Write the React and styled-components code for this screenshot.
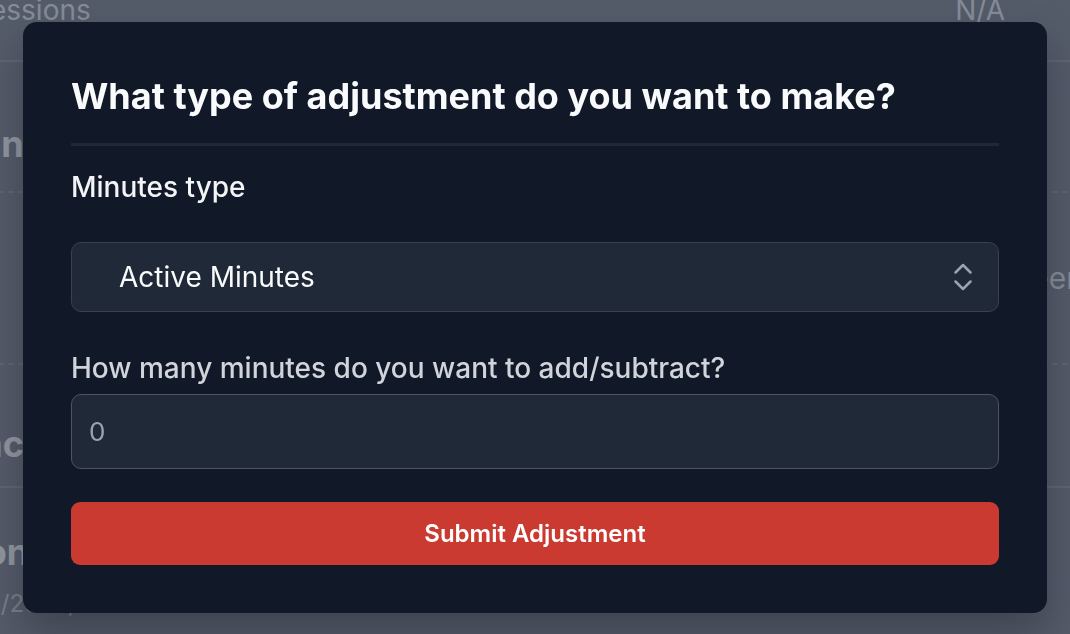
import React, { useState } from "react";
import styled, { createGlobalStyle } from "styled-components";
import { ChevronsUpDown } from "lucide-react";

const GlobalStyle = createGlobalStyle`
  * { box-sizing: border-box; }
  html, body { margin: 0; height: 100%; overflow: hidden; }
  body {
    background: #111827;
    color: #f3f4f6;
    font-family: Inter, "Noto Sans", sans-serif;
  }
`;

// page that sits behind the modal
const Bg = {
  Page: styled.main`
    width: 1170px;
    margin-left: -42px;
  `,
  StatRow: styled.div`
    display: flex;
    justify-content: space-between;
    align-items: flex-start;
    height: 62px;
    padding: 0 123px 0 14px;
    border-bottom: 2px solid #374151;
    font-size: 28px;
    line-height: 20px;
    color: #d1d5db;
  `,
  Section: styled.section`
    display: flex;
    flex-direction: ${p => (p.$column ? "column" : "row")};
    justify-content: ${p => p.$justify || "flex-start"};
    align-items: ${p => p.$align || "flex-end"};
    height: ${p => p.$h}px;
    padding: ${p => p.$pt || 0}px ${p => p.$pr || 0}px ${p => p.$pb || 0}px 0;
    border-bottom: ${p => (p.$line ? `2px ${p.$line} #374151` : "none")};
  `,
  Heading: styled.h3`
    margin: 0;
    font-size: 36px;
    line-height: 44px;
    font-weight: 700;
    color: #f9fafb;
  `,
  Value: styled.span`
    font-size: 30px;
    color: #d1d5db;
  `,
  Meta: styled.p`
    margin: 12px 0 0;
    font-size: 24px;
    line-height: 36px;
    color: #9ca3af;
  `
};

const Styled = {
  Overlay: styled.div`
    position: fixed;
    inset: 0;
    display: flex;
    align-items: center;
    justify-content: center;
    background: rgba(107, 114, 128, 0.75);
  `,
  Dialog: styled.div`
    width: 1024px;
    padding: 48px;
    border-radius: 14px;
    background: #111827;
    box-shadow: 0 20px 40px rgba(0, 0, 0, 0.25);
  `,
  Title: styled.h2`
    margin: 0;
    font-size: 36px;
    line-height: 52px;
    font-weight: 700;
    color: #f9fafb;
  `,
  Rule: styled.div`
    height: 3px;
    margin-top: 21px;
    background: #1f2937;
  `,
  Label: styled.label`
    display: block;
    margin: ${p => (p.$first ? "23px 0 37px" : "38px 0 8px")};
    font-size: 28px;
    line-height: 36px;
    font-weight: 500;
    color: ${p => (p.$first ? "#f3f4f6" : "#d1d5db")};
  `,
  SelectWrap: styled.div`
    position: relative;
  `,
  Select: styled.select`
    display: block;
    width: 100%;
    height: 70px;
    padding: 0 60px 0 47px;
    appearance: none;
    border: 1px solid #374151;
    border-radius: 10px;
    background: #1f2937;
    color: #f9fafb;
    font-family: inherit;
    font-size: 28px;
    outline: none;
  `,
  Arrow: styled.span`
    position: absolute;
    top: 50%;
    right: 18px;
    display: flex;
    transform: translateY(-50%);
    color: #9ca3af;
    pointer-events: none;
  `,
  Input: styled.input`
    display: block;
    width: 100%;
    height: 75px;
    padding: 0 17px;
    border: 1px solid #4b5563;
    border-radius: 10px;
    background: #1f2937;
    color: #f9fafb;
    font-family: inherit;
    font-size: 26px;
    outline: none;
    &::placeholder { color: #9ca3af; }
  `,
  Submit: styled.button`
    display: block;
    width: 100%;
    height: 63px;
    margin-top: 33px;
    border: 0;
    border-radius: 9px;
    background: #ca3a31;
    color: #fff;
    font-family: inherit;
    font-size: 24px;
    font-weight: 600;
    cursor: pointer;
  `
};

function BackgroundPage() {
  return (
    <Bg.Page aria-hidden="true">
      <Bg.StatRow>
        <span>Sessions</span>
        <span>N/A</span>
      </Bg.StatRow>
      <Bg.Section $h={131} $pb={25} $line="dashed">
        <Bg.Heading>Minutes</Bg.Heading>
      </Bg.Section>
      <Bg.Section $h={172} $align="center" $justify="flex-end" $pr={44} $line="dashed">
        <Bg.Value>Seen</Bg.Value>
      </Bg.Section>
      <Bg.Section $h={123} $pb={20} $line="solid">
        <Bg.Heading>Backfill</Bg.Heading>
      </Bg.Section>
      <Bg.Section $h={146} $pt={42} $column $align="flex-start">
        <Bg.Heading>Connected Devices</Bg.Heading>
        <Bg.Meta>11/2/2025, 3:00:00 PM · calisco-4f1a9b2c0e7d3b55</Bg.Meta>
      </Bg.Section>
    </Bg.Page>
  );
}

export default function App() {
  const [type, setType] = useState("active");
  const [minutes, setMinutes] = useState("");

  const onSubmit = evt => {
    evt.preventDefault();
  };

  return (
    <>
      <GlobalStyle />
      <BackgroundPage />
      <Styled.Overlay>
        <Styled.Dialog role="dialog" aria-modal="true">
          <Styled.Title>What type of adjustment do you want to make?</Styled.Title>
          <Styled.Rule />
          <Styled.Label $first htmlFor="minutes-type">
            Minutes type
          </Styled.Label>
          <Styled.SelectWrap>
            <Styled.Select
              id="minutes-type"
              value={type}
              onChange={evt => setType(evt.target.value)}
            >
              <option value="active">Active Minutes</option>
              <option value="passive">Passive Minutes</option>
            </Styled.Select>
            <Styled.Arrow>
              <ChevronsUpDown size={36} strokeWidth={1.7} />
            </Styled.Arrow>
          </Styled.SelectWrap>
          <Styled.Label htmlFor="minutes-amount">
            How many minutes do you want to add/subtract?
          </Styled.Label>
          <Styled.Input
            id="minutes-amount"
            type="number"
            placeholder="0"
            value={minutes}
            onChange={evt => setMinutes(evt.target.value)}
          />
          <Styled.Submit onClick={onSubmit}>Submit Adjustment</Styled.Submit>
        </Styled.Dialog>
      </Styled.Overlay>
    </>
  );
}
